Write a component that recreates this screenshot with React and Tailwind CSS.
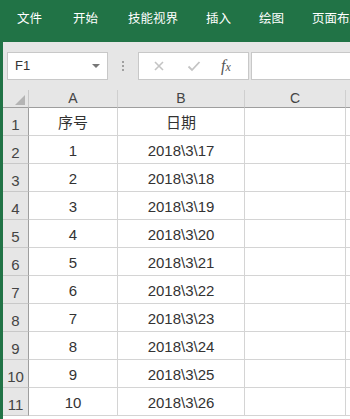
import React from "react";

const tabs = [
  { label: "文件", gap: 0 },
  { label: "开始", gap: 31 },
  { label: "技能视界", gap: 30 },
  { label: "插入", gap: 28 },
  { label: "绘图", gap: 28 },
  { label: "页面布局", gap: 28 },
];

const rows = [
  ["序号", "日期"],
  ["1", "2018\\3\\17"],
  ["2", "2018\\3\\18"],
  ["3", "2018\\3\\19"],
  ["4", "2018\\3\\20"],
  ["5", "2018\\3\\21"],
  ["6", "2018\\3\\22"],
  ["7", "2018\\3\\23"],
  ["8", "2018\\3\\24"],
  ["9", "2018\\3\\25"],
  ["10", "2018\\3\\26"],
];

const font = { fontFamily: '"Liberation Sans", "Noto Sans CJK SC", sans-serif' };

const App = () => {
  return (
    <div className="w-[350px] h-[419px] overflow-hidden bg-white" style={font}>
      {/* ribbon tabs */}
      <div className="h-[42px] bg-[#217346] flex items-center text-white text-[12.5px] whitespace-nowrap overflow-hidden pb-[3px]">
        <div className="flex pl-[17px]">
          {tabs.map((t) => (
            <span key={t.label} style={{ marginLeft: t.gap }}>
              {t.label}
            </span>
          ))}
        </div>
      </div>

      <div className="border-l-[3px] border-[#217346] h-full">
        {/* formula bar */}
        <div className="h-[48px] bg-[#e6e6e6] flex items-start pt-[10px] pl-[4px]">
          <div className="w-[101px] h-[28px] bg-white border border-[#c8c8c8] flex items-center justify-between pl-[7px] pr-[7px] text-[13px] text-[#333]">
            <span>F1</span>
            <span className="w-0 h-0 border-l-[4px] border-r-[4px] border-t-[4px] border-l-transparent border-r-transparent border-t-[#777]" />
          </div>
          <div className="w-[30px] h-[28px] flex flex-col items-center justify-center gap-[2px]">
            <span className="w-[2px] h-[2px] bg-[#a0a0a0]" />
            <span className="w-[2px] h-[2px] bg-[#a0a0a0]" />
            <span className="w-[2px] h-[2px] bg-[#a0a0a0]" />
          </div>
          <div className="w-[111px] h-[28px] bg-white border border-[#c8c8c8] flex items-center pl-[12px]">
            <svg width="12" height="12" viewBox="0 0 12 12" className="ml-[2px]">
              <path d="M2 2 L10 10 M10 2 L2 10" stroke="#c4c4c4" strokeWidth="1.6" />
            </svg>
            <svg width="14" height="12" viewBox="0 0 14 12" className="ml-[22px]">
              <path d="M1.5 6.5 L5 10 L12.5 2" stroke="#c4c4c4" strokeWidth="1.8" fill="none" />
            </svg>
            <span className="ml-[20px] text-[16px] italic text-[#555] leading-none" style={{ fontFamily: '"Liberation Serif", serif' }}>
              f<span className="text-[12px]">x</span>
            </span>
          </div>
          <div className="w-[3px] h-[28px] border-r border-[#c8c8c8]" />
          <div className="flex-1 h-[28px] bg-white border-t border-b border-[#c8c8c8]" />
        </div>

        {/* grid */}
        <div className="grid grid-cols-[26px_89px_127px_101px_1fr] text-[#333]">
          {/* column headers */}
          <div className="h-[18px] bg-[#e6e6e6] border-b border-[#9e9e9e] border-r border-r-[#c8c8c8] relative">
            <span className="absolute right-[3px] bottom-[2px] w-0 h-0" style={{ borderBottom: "10px solid #b4b4b4", borderLeft: "10px solid transparent" }} />
          </div>
          {["A", "B", "C"].map((c) => (
            <div key={c} className="h-[18px] bg-[#e6e6e6] border-b border-[#9e9e9e] border-r border-r-[#cfcfcf] flex items-end justify-center text-[14px] leading-[17px] text-[#444]">
              {c}
            </div>
          ))}
          <div className="h-[18px] bg-[#e6e6e6] border-b border-[#9e9e9e]" />

          {rows.map((r, i) => (
            <React.Fragment key={i}>
              <div className="h-[28px] bg-[#e6e6e6] border-b border-[#c8c8c8] border-r border-r-[#9e9e9e] flex items-end justify-center text-[15px] leading-[18px] pb-[1px] text-[#444]">
                {i + 1}
              </div>
              <div className="h-[28px] border-b border-r border-[#d4d4d4] flex items-center justify-center text-[15px] pt-[3px]">
                {r[0]}
              </div>
              <div className="h-[28px] border-b border-r border-[#d4d4d4] flex items-center justify-center text-[15px] pt-[3px]">
                {r[1]}
              </div>
              <div className="h-[28px] border-b border-r border-[#d4d4d4]" />
              <div className="h-[28px] border-b border-[#d4d4d4]" />
            </React.Fragment>
          ))}
        </div>
      </div>
    </div>
  );
};

export default App;
